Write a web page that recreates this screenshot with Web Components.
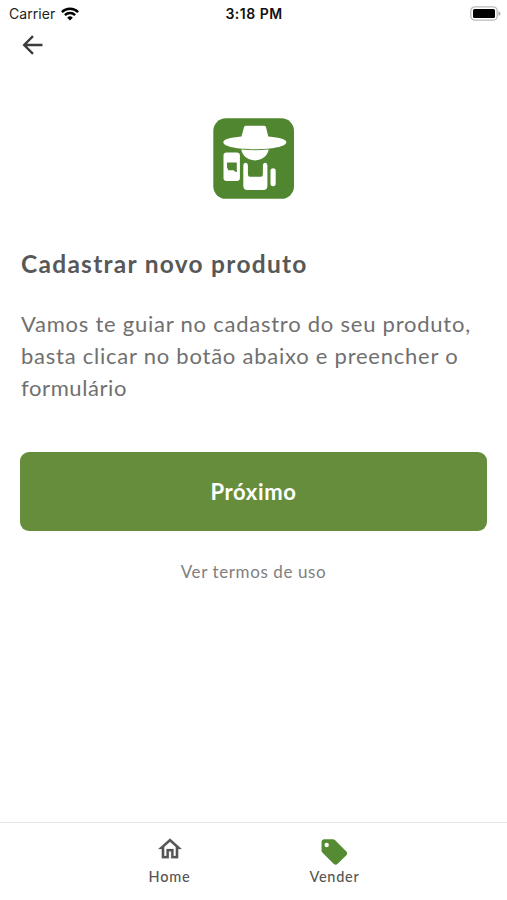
<!DOCTYPE html>
<html lang="pt-BR">
<head>
<meta charset="utf-8">
<meta name="viewport" content="width=device-width, initial-scale=1">
<title>Cadastrar novo produto</title>
<style>
    body {
        margin: 0;
        background: #fff;
        font-family: Lato, "Liberation Sans", sans-serif;
    }
</style>
</head>
<body>
<app-screen>
    <status-bar slot="top" carrier="Carrier" time="3:18 PM"></status-bar>
    <nav-header slot="top"></nav-header>
    <brand-logo></brand-logo>
    <intro-text>
        <span slot="title">Cadastrar novo produto</span>
        <span slot="line">Vamos te guiar no cadastro do seu produto,</span>
        <span slot="line">basta clicar no botão abaixo e preencher o</span>
        <span slot="line" style="letter-spacing: 0.6px">formulário</span>
    </intro-text>
    <primary-button>Próximo</primary-button>
    <text-link>Ver termos de uso</text-link>
    <tab-bar slot="bottom">
        <tab-item label="Home">
            <svg width="28" height="28" viewBox="0 0 24 24"><path fill="#555" stroke="#555" stroke-width=".2" d="m12 5.69 5 4.5V18h-2v-6H9v6H7v-7.81l5-4.5M12 3 2 12h3v8h6v-6h2v6h6v-8h3L12 3Z"/></svg>
        </tab-item>
        <tab-item label="Vender">
            <svg width="31" height="28" viewBox="0 0 31 28" overflow="visible"><path fill="#558b33" transform="translate(0 1.7) scale(1.28)" d="m21.41 11.58-9-9C12.05 2.22 11.55 2 11 2H4c-1.1 0-2 .9-2 2v7c0 .55.22 1.05.59 1.42l9 9c.36.36.86.58 1.41.58s1.05-.22 1.41-.59l7-7c.37-.36.59-.86.59-1.41s-.23-1.06-.59-1.42zM6 8.2a1.7 1.7 0 1 1 0-3.4 1.7 1.7 0 0 1 0 3.4z"/></svg>
        </tab-item>
    </tab-bar>
</app-screen>

<script>
class AppScreen extends HTMLElement {
    constructor() {
        super();
        this.attachShadow({ mode: 'open' });
        this.shadowRoot.innerHTML = `
            <style>
                :host {
                    display: flex;
                    flex-direction: column;
                    height: 900px;
                    overflow: hidden;
                }
                main {
                    flex: 1;
                    display: flex;
                    flex-direction: column;
                    padding: 55px 20px 0;
                }
            </style>
            <slot name="top"></slot>
            <main><slot></slot></main>
            <slot name="bottom"></slot>
        `;
    }
}

class StatusBar extends HTMLElement {
    constructor() {
        super();
        this.attachShadow({ mode: 'open' });
        this.shadowRoot.innerHTML = `
            <style>
                :host {
                    display: grid;
                    grid-template-columns: 1fr auto 1fr;
                    align-items: center;
                    height: 27px;
                    padding: 0 6px 0 9px;
                    font: 14px/27px Inter, "Liberation Sans", sans-serif;
                    letter-spacing: 0.05px;
                    color: #222;
                }
                .left {
                    display: flex;
                    align-items: center;
                    gap: 6px;
                }
                .time {
                    margin-left: -2px;
                    font-weight: 600;
                    color: #111;
                    letter-spacing: 0.5px;
                }
                .battery {
                    justify-self: end;
                }
                svg {
                    display: block;
                }
            </style>
            <div class="left">
                <span class="carrier"></span>
                <svg width="18" height="14" viewBox="0 0 18 14" fill="none" stroke="#000" stroke-width="2.5">
                    <path d="M.9 5.2a11.5 11.5 0 0 1 16.2 0"/>
                    <path d="M3.9 8.2a7.2 7.2 0 0 1 10.2 0"/>
                    <path d="M9 13.5 6.2 10.7a4 4 0 0 1 5.6 0z" fill="#000" stroke="none"/>
                </svg>
            </div>
            <span class="time"></span>
            <svg class="battery" width="31" height="15" viewBox="0 0 31 15">
                <rect x=".8" y=".8" width="26.4" height="13.4" rx="4" fill="#fff" stroke="#bbb" stroke-width="1.3"/>
                <rect x="3" y="3" width="22" height="9" rx="1.5"/>
                <path d="M28.5 5v5q2-1 2-2.5t-2-2.5z" fill="#aaa"/>
            </svg>
        `;
    }

    connectedCallback() {
        this.shadowRoot.querySelector('.carrier').textContent = this.getAttribute('carrier');
        this.shadowRoot.querySelector('.time').textContent = this.getAttribute('time');
    }
}

class NavHeader extends HTMLElement {
    constructor() {
        super();
        this.attachShadow({ mode: 'open' });
        this.shadowRoot.innerHTML = `
            <style>
                :host {
                    display: flex;
                    align-items: center;
                    height: 36px;
                    padding-left: 19px;
                }
                button {
                    padding: 0;
                    border: 0;
                    background: none;
                }
                svg {
                    display: block;
                }
            </style>
            <button aria-label="Voltar">
                <svg width="28" height="28" viewBox="0 0 28 28" fill="none" stroke="#3c3c3c" stroke-width="2.4">
                    <path d="M23.5 14H6M14 5.2 5.2 14l8.8 8.8"/>
                </svg>
            </button>
        `;
    }
}

class BrandLogo extends HTMLElement {
    constructor() {
        super();
        this.attachShadow({ mode: 'open' });
        this.shadowRoot.innerHTML = `
            <style>
                :host {
                    display: block;
                    height: 81px;
                    align-self: center;
                }
                svg {
                    display: block;
                }
            </style>
            <svg width="81" height="81" viewBox="0 0 81 81">
                <rect x=".3" y=".3" width="80.7" height="80.5" rx="12.5" fill="#518631"/>
                <g fill="#fff">
                    <path d="M31 9.2q.2-1.5 1.7-1.5h18.600q1.500 0 1.700 1.500l2.300 9.300q18 1.500 18 5.700c0 4.300-14 7-31.500 7s-31.500-2.700-31.500-7q0-4.200 18.200-5.700z"/>
                    <path d="M28.3 31.6q13.800 1.200 27.400 0c-1 6.300-6.600 10.800-13.700 10.800s-12.700-4.500-13.700-10.800z"/>
                    <rect x="10.5" y="34.5" width="16.4" height="28.6" rx="3"/>
                    <path d="M32.6 44.7q2.300 0 2.300 2.500v8q0 3.500 1.800 3.500h11.400q1.800 0 1.800-3.500v-8q0-2.500 2.200-2.500 2.300 0 2.300 2.500v20.600q0 4.200-4 4.200H34.300q-4 0-4-4.200V47.200q0-2.500 2.300-2.500z"/>
                    <rect x="57.500" y="50.200" width="5.200" height="18" rx="2.600"/>
                </g>
                <path fill="#518631" d="M14 44.5h9.800v7l.4 2.200h-2.200l-1.300-1.500H15v-1.700h-1z"/>
            </svg>
        `;
    }
}

class IntroText extends HTMLElement {
    constructor() {
        super();
        this.attachShadow({ mode: 'open' });
        this.shadowRoot.innerHTML = `
            <style>
                :host {
                    display: block;
                    margin-top: 48px;
                    padding-left: 1px;
                }
                h1 {
                    margin: 0 0 29px;
                    font-size: 24.5px;
                    line-height: 33px;
                    font-weight: 700;
                    letter-spacing: 1.28px;
                    color: #585858;
                }
                p {
                    margin-top: -1px;
                    margin-bottom: 0;
                    font-size: 22px;
                    line-height: 31.8px;
                    letter-spacing: 0.76px;
                    color: #707070;
                }
                ::slotted([slot="line"]) {
                    display: block;
                    white-space: nowrap;
                }
            </style>
            <h1><slot name="title"></slot></h1>
            <p><slot name="line"></slot></p>
        `;
    }
}

class PrimaryButton extends HTMLElement {
    constructor() {
        super();
        this.attachShadow({ mode: 'open' });
        this.shadowRoot.innerHTML = `
            <style>
                :host {
                    display: block;
                    margin-top: 48.7px;
                }
                button {
                    display: block;
                    width: 100%;
                    height: 79px;
                    padding: 0;
                    border: 0;
                    border-radius: 9px;
                    background: #658d3b;
                    color: #fff;
                    font: 700 22px/79px Lato, "Liberation Sans", sans-serif;
                    letter-spacing: 0.65px;
                }
            </style>
            <button><slot></slot></button>
        `;
    }
}

class TextLink extends HTMLElement {
    constructor() {
        super();
        this.attachShadow({ mode: 'open' });
        this.shadowRoot.innerHTML = `
            <style>
                :host {
                    display: block;
                    margin-top: 29px;
                    text-align: center;
                    font-size: 17px;
                    line-height: 24px;
                    letter-spacing: 0.6px;
                    color: #808080;
                }
            </style>
            <slot></slot>
        `;
    }
}

class TabBar extends HTMLElement {
    constructor() {
        super();
        this.attachShadow({ mode: 'open' });
        this.shadowRoot.innerHTML = `
            <style>
                :host {
                    display: flex;
                    justify-content: center;
                    height: 77px;
                    padding-right: 3px;
                    border-top: 1px solid #e4e4e4;
                }
            </style>
            <slot></slot>
        `;
    }
}

class TabItem extends HTMLElement {
    constructor() {
        super();
        this.attachShadow({ mode: 'open' });
        this.shadowRoot.innerHTML = `
            <style>
                :host {
                    display: flex;
                    flex-direction: column;
                    align-items: center;
                    width: 165px;
                    padding-top: 12px;
                }
                .label {
                    margin-top: 3px;
                    font-size: 14.5px;
                    line-height: 21px;
                    font-weight: 500;
                    letter-spacing: 0.75px;
                    color: #555;
                }
                ::slotted(svg) {
                    display: block;
                }
            </style>
            <slot></slot>
            <span class="label"></span>
        `;
    }

    connectedCallback() {
        this.shadowRoot.querySelector('.label').textContent = this.getAttribute('label');
    }
}

customElements.define('app-screen', AppScreen);
customElements.define('status-bar', StatusBar);
customElements.define('nav-header', NavHeader);
customElements.define('brand-logo', BrandLogo);
customElements.define('intro-text', IntroText);
customElements.define('primary-button', PrimaryButton);
customElements.define('text-link', TextLink);
customElements.define('tab-bar', TabBar);
customElements.define('tab-item', TabItem);
</script>
</body>
</html>
